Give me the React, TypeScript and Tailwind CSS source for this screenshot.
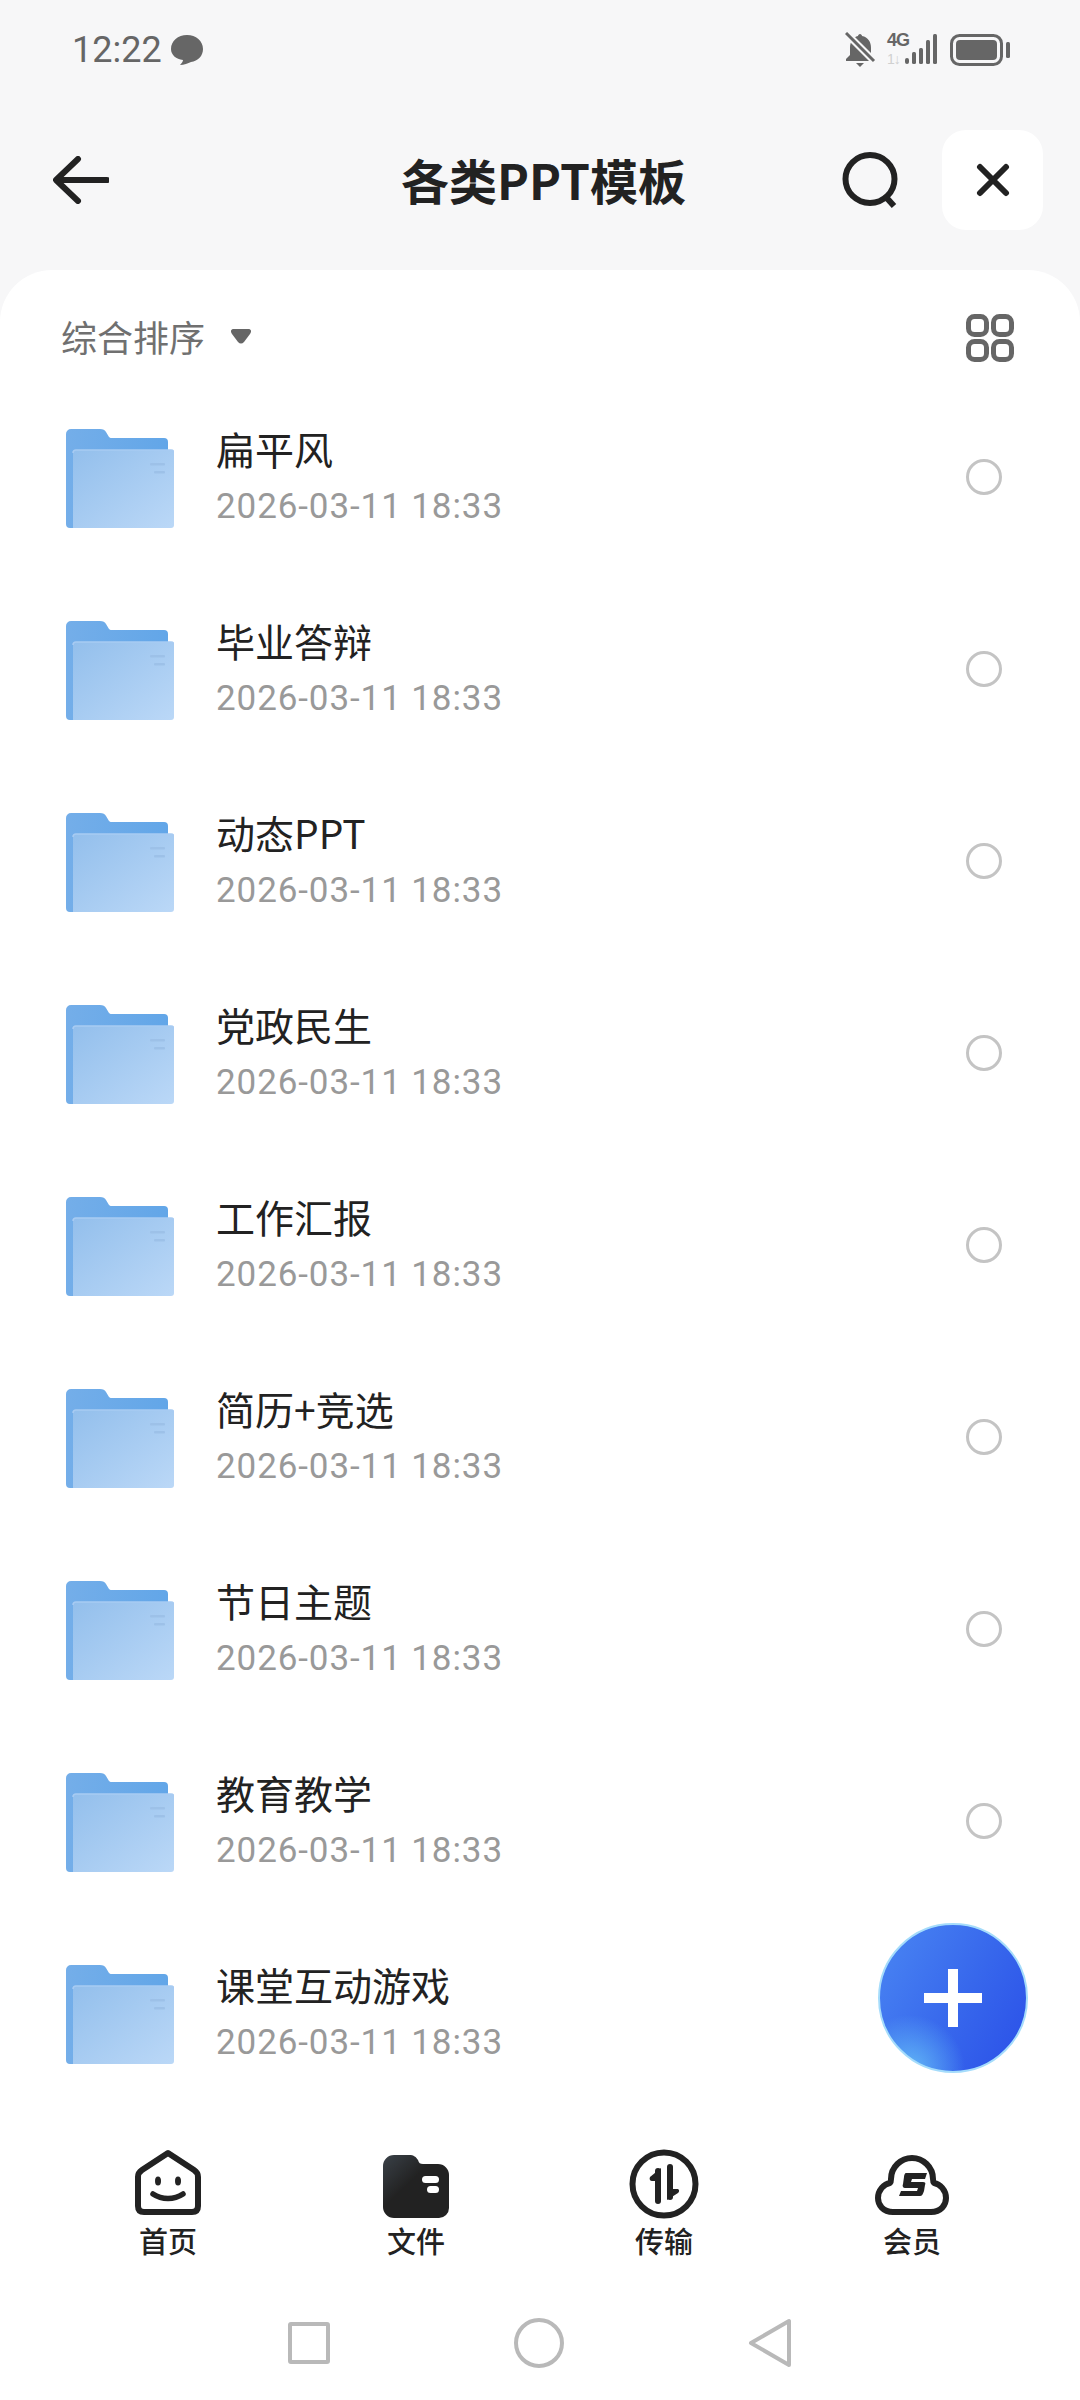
import React from 'react';

const folders = ['扁平风', '毕业答辩', '动态PPT', '党政民生', '工作汇报', '简历+竞选', '节日主题', '教育教学', '课堂互动游戏'];

const FolderIcon: React.FC<{ id: number }> = ({ id }) => (
  <svg width="108" height="100" viewBox="0 0 108 100" className="shrink-0 -mt-[3px]">
    <defs>
      <linearGradient id={`back-${id}`} x1="0" y1="0" x2="1" y2="0">
        <stop offset="0" stopColor="#74aee9" />
        <stop offset="1" stopColor="#62a6e8" />
      </linearGradient>
      <linearGradient id={`front-${id}`} x1="0" y1="0" x2="1" y2="1">
        <stop offset="0" stopColor="#93bfec" />
        <stop offset="1" stopColor="#bbd8f7" />
      </linearGradient>
    </defs>
    <path
      d="M0 6a5 5 0 0 1 5-5h29c3 0 5 1 6 3l3 5c1 1 2 1 3 1h52a4 4 0 0 1 4 4v86H4a4 4 0 0 1-4-4z"
      fill={`url(#back-${id})`}
    />
    <path d="M7 25a3 3 0 0 1 3-3h95a3 3 0 0 1 3 3v72a3 3 0 0 1-3 3H7z" fill={`url(#front-${id})`} />
    <path d="M7 25a3 3 0 0 1 3-3h95a3 3 0 0 1 3 3" fill="none" stroke="#a8cbf2" strokeWidth="1.5" />
    <rect x="84" y="35" width="15" height="2.5" rx="1" fill="#9dc1e8" />
    <rect x="88" y="43" width="11" height="2.5" rx="1" fill="#9dc1e8" />
  </svg>
);

const FolderRow: React.FC<{ name: string; index: number }> = ({ name, index }) => (
  <div className="h-[192px] flex items-center pl-[66px] pr-[78px]">
    <FolderIcon id={index} />
    <div className="ml-[42px] flex-1 -mt-[2px]">
      <div className="text-[39px] leading-[56px] text-[#222222] -mt-[6px]">{name}</div>
      <div className="text-[35px] leading-[46px] mt-[8px] text-[#999999] font-['Roboto',sans-serif] tracking-[0.9px]">2026-03-11 18:33</div>
    </div>
    <div className="w-[36px] h-[36px] rounded-full border-[3px] border-[#c4c4c4] -mt-[4px]" />
  </div>
);

const HomeIcon = () => (
  <svg width="70" height="72" viewBox="0 0 70 72">
    <path d="M35 5 61 22c3 2 4 4 4 7v29c0 4-2 6-6 6H11c-4 0-6-2-6-6V29c0-3 1-5 4-7z" fill="none" stroke="#222222" strokeWidth="6" strokeLinejoin="round" />
    <ellipse cx="25" cy="33" rx="3" ry="4.500" fill="#222222" />
    <ellipse cx="45" cy="33" rx="3" ry="4.500" fill="#222222" />
    <path d="M20 46c9 6 21 6 30 0" fill="none" stroke="#222222" strokeWidth="5.500" strokeLinecap="round" />
  </svg>
);

const FileIcon = () => (
  <svg width="70" height="72" viewBox="0 0 70 72">
    <defs>
      <linearGradient id="file-fill" x1="0" y1="0" x2="0.7" y2="0.7">
        <stop offset="0" stopColor="#3a4148" />
        <stop offset="0.6" stopColor="#222222" />
      </linearGradient>
    </defs>
    <path d="M2 18A11 11 0 0 1 13 7h15c5 0 7 2 9 5 1 3 2 4 5 4h15a11 11 0 0 1 11 11v33a10 10 0 0 1-10 10H13A11 11 0 0 1 2 59z" fill="url(#file-fill)" />
    <rect x="41" y="28" width="17" height="7" rx="3.500" fill="#ffffff" />
    <rect x="46" y="38" width="12" height="7" rx="3.500" fill="#ffffff" />
  </svg>
);

const TransferIcon = () => (
  <svg width="70" height="72" viewBox="0 0 70 72">
    <circle cx="35" cy="36" r="31.500" fill="none" stroke="#222222" strokeWidth="6" />
    <path d="M29 23v30" stroke="#222222" strokeWidth="6" strokeLinecap="round" />
    <path d="M32 20 21 29c-1 2 0 4 2 4h9z" fill="#222222" />
    <path d="M41 19v30" stroke="#222222" strokeWidth="6" strokeLinecap="round" />
    <path d="M38 52 49 45c2-2 1-4-1-4H38z" fill="#222222" />
  </svg>
);

const CloudIcon = () => (
  <svg width="74" height="72" viewBox="0 0 74 72">
    <path d="M18 64C8 64 3 57 3 50c0-8 6-14 12-15 1-1 1-2 1-4 0-12 10-21 21-21s21 9 21 21c0 2 0 3 1 4 6 1 12 7 12 15 0 7-5 14-15 14z" fill="none" stroke="#222222" strokeWidth="6" strokeLinejoin="round" />
    <path d="M31 25h21l-2 6H37l-1 3h12c2 0 3 1 2 3l-1 6c-1 3-2 5-4 5H24l2-5h16l1-3H30c-2 0-3-2-2-4l1-7c0-2 1-4 2-4z" fill="#222222" />
  </svg>
);

const tabs: { label: string; icon: React.ReactNode }[] = [
  { label: '首页', icon: <HomeIcon /> },
  { label: '文件', icon: <FileIcon /> },
  { label: '传输', icon: <TransferIcon /> },
  { label: '会员', icon: <CloudIcon /> },
];

const StatusIcons = () => (
  <div className="flex items-center">
    <svg width="32" height="36" viewBox="0 0 32 36">
      <path d="M15 2c1 0 2 1 2 2 6 1 9 6 9 12v7l4 4v2H1v-2l4-4v-7C5 10 8 5 13 4c0-1 1-2 2-2z" fill="#666666" />
      <path d="M11 31h8l-4 4z" fill="#666666" />
      <path d="M2 2 30 30" stroke="#f7f7f8" strokeWidth="7" />
      <path d="M1 1 29 29" stroke="#666666" strokeWidth="3" />
    </svg>
    <div className="relative w-[50px] h-[34px] ml-[10px]">
      <span className="absolute left-0 -top-[2px] text-[18px] leading-[18px] font-bold text-[#666666] font-['Liberation_Sans',sans-serif] tracking-[-1px]">4G</span>
      <span className="absolute left-0 top-[19px] text-[14px] leading-[14px] text-[#d0d0d0] font-['Liberation_Sans',sans-serif] tracking-[-1px]">1↓</span>
      <svg width="34" height="32" viewBox="0 0 34 32" className="absolute left-[17px] top-0">
        <rect x="1" y="25" width="4" height="6" rx="2" fill="#666666" />
        <rect x="8" y="19" width="4" height="12" rx="1.500" fill="#666666" />
        <rect x="15" y="15" width="4" height="16" rx="1.500" fill="#666666" />
        <rect x="22" y="7" width="4" height="24" rx="1.500" fill="#666666" />
        <rect x="29" y="1" width="4" height="30" rx="1.500" fill="#666666" />
      </svg>
    </div>
    <svg width="60" height="32" viewBox="0 0 60 32" className="ml-[13px]">
      <rect x="1.500" y="1.500" width="50" height="29" rx="8" fill="none" stroke="#666666" strokeWidth="3" />
      <rect x="6" y="6" width="41" height="20" rx="4" fill="#666666" />
      <rect x="56" y="8" width="4" height="16" rx="1.500" fill="#666666" />
    </svg>
  </div>
);

const App: React.FC = () => {
  return (
    <div className="relative w-[1080px] h-[2400px] overflow-hidden bg-[#f7f7f8] flex flex-col font-['Noto_Sans_CJK_SC','Noto_Sans',sans-serif]">
      {/* Status bar */}
      <div className="h-[100px] shrink-0 flex items-center justify-between pl-[72px] pr-[70px]">
        <div className="flex items-center">
          <span className="text-[36px] leading-none text-[#666666] font-['Roboto',sans-serif]">12:22</span>
          <svg width="32" height="30" viewBox="0 0 32 30" className="ml-[9px]">
            <path d="M16 0c9 0 16 6 16 14 0 7-5 12-12 13-3 1-7 3-11 3 2-2 3-4 3-5C5 24 0 20 0 14 0 6 7 0 16 0z" fill="#666666" />
          </svg>
        </div>
        <StatusIcons />
      </div>

      {/* Header */}
      <div className="h-[170px] shrink-0 flex items-center pb-[10px] pl-[53px] pr-[37px]">
        <svg width="56" height="48" viewBox="0 0 56 48">
          <path d="M25 3 3 24l22 21M4 24h50" fill="none" stroke="#222222" strokeWidth="6" strokeLinecap="round" strokeLinejoin="round" />
        </svg>
        <div className="flex-1 text-center text-[48px] leading-[60px] font-bold text-[#222222] pl-[136px] -mt-[3px]">各类PPT模板</div>
        <svg width="58" height="56" viewBox="0 0 58 56" className="mr-[42px]">
          <ellipse cx="28" cy="27" rx="24.500" ry="24" fill="none" stroke="#222222" strokeWidth="6" />
          <path d="M43 44l9 10" stroke="#222222" strokeWidth="6" />
        </svg>
        <div className="w-[101px] h-[100px] rounded-[24px] bg-white flex items-center justify-center">
          <svg width="34" height="34" viewBox="0 0 34 34">
            <path d="M4 4l26 26M30 4 4 30" fill="none" stroke="#222222" strokeWidth="6" strokeLinecap="round" />
          </svg>
        </div>
      </div>

      {/* File list */}
      <div className="flex-1 bg-white rounded-t-[52px] flex flex-col min-h-0">
        <div className="h-[113px] shrink-0 flex items-start justify-between pt-[44px] pl-[61px] pr-[66px]">
          <div className="flex items-center">
            <span className="text-[36px] leading-[44px] text-[#707070]">综合排序</span>
            <svg width="20" height="15" viewBox="0 0 20 15" className="ml-[26px]">
              <path d="M3 0h14c3 0 4 2 2 5l-6 8c-2 2-4 2-6 0L1 5C-1 2 0 0 3 0z" fill="#666666" />
            </svg>
          </div>
          <svg width="48" height="48" viewBox="0 0 48 48">
            <rect x="2.500" y="2.500" width="18" height="18" rx="6" fill="none" stroke="#666666" strokeWidth="5" />
            <rect x="27.500" y="2.500" width="18" height="18" rx="6" fill="none" stroke="#666666" strokeWidth="5" />
            <rect x="2.500" y="27.500" width="18" height="18" rx="6" fill="none" stroke="#666666" strokeWidth="5" />
            <rect x="27.500" y="27.500" width="18" height="18" rx="6" fill="none" stroke="#666666" strokeWidth="5" />
          </svg>
        </div>

        <div className="shrink-0">
          {folders.map((name, i) => (
            <FolderRow key={name} name={name} index={i} />
          ))}
        </div>

        {/* Tab bar */}
        <div className="grid grid-cols-4 px-[44px] pt-[37px] shrink-0">
          {tabs.map(tab => (
            <div key={tab.label} className="flex flex-col items-center">
              <div className="h-[72px] flex items-center justify-center">{tab.icon}</div>
              <span className="text-[29px] leading-[36px] font-medium text-[#222222] mt-[2px]">{tab.label}</span>
            </div>
          ))}
        </div>

        {/* System nav */}
        <div className="flex-1 flex items-center justify-center gap-[184px] pt-[28px]">
          <div className="w-[42px] h-[42px] border-[4px] border-[#b9b9b9] rounded-[3px]" />
          <div className="w-[50px] h-[50px] border-[4px] border-[#b9b9b9] rounded-full" />
          <svg width="44" height="50" viewBox="0 0 44 50">
            <path d="M41 3v44L3 25z" fill="none" stroke="#b9b9b9" strokeWidth="4" strokeLinejoin="round" />
          </svg>
        </div>
      </div>

      {/* Add button */}
      <div className="absolute left-[878px] top-[1923px] w-[150px] h-[150px] rounded-full flex items-center justify-center border-[2px] border-[#a5dcfb] bg-[radial-gradient(circle_at_20%_100%,#62b8f7_0%,transparent_30%),linear-gradient(120deg,#4a86f3_0%,#3767ec_55%,#2a4fe8_100%)]">
        <svg width="58" height="58" viewBox="0 0 58 58">
          <path d="M24 0h10v24h24v10H34v24H24V34H0V24h24z" fill="#ffffff" />
        </svg>
      </div>
    </div>
  );
};

export default App;
